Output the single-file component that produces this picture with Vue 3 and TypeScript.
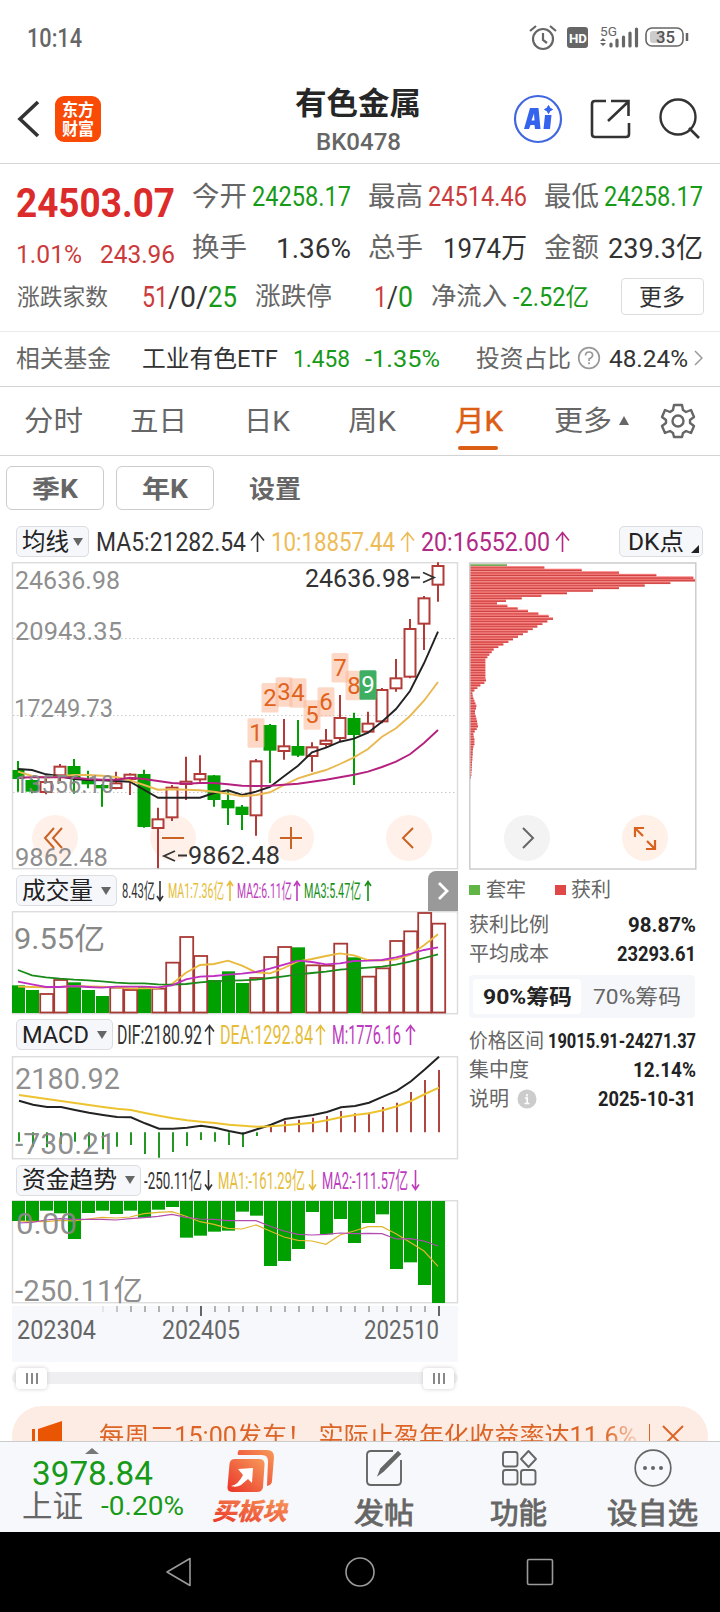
<script setup lang="ts">
import { h, type FunctionalComponent } from 'vue'

// Single-line label squeezed or stretched to a fixed advance width
const Fit: FunctionalComponent<{ t: string; w: number }> = (props) =>
  h('svg', { class: 'fit', width: props.w, height: '1em' }, [
    h('text', { x: 0, y: '.86em', textLength: props.w, lengthAdjust: 'spacingAndGlyphs', fill: 'currentColor', 'xml:space': 'preserve' }, props.t),
  ])
Fit.props = ['t', 'w']

const Arrow: FunctionalComponent<{ dir?: string; w?: number }> = (props) => {
  const w = props.w ?? 15
  const d = props.dir === 'down'
    ? `M${w / 2} 1V20M1 ${20 - w / 2}L${w / 2} 20.500L${w - 1} ${20 - w / 2}`
    : `M${w / 2} 21V2M1 ${2 + w / 2}L${w / 2} 1.500L${w - 1} ${2 + w / 2}`
  return h('svg', { class: 'arrow', width: w, height: 22 }, [
    h('path', { d, fill: 'none', stroke: 'currentColor', 'stroke-width': 1.6 }),
  ])
}
Arrow.props = ['dir', 'w']

type Candle = [up: number, high: number, low: number, top: number, bottom: number]
const third = (v: number) => v / 3
const candles: Candle[] = [
  [0, 618, 710, 645, 672], [0, 673, 715, 675, 710], [1, 672, 718, 678, 714], [1, 627, 678, 632, 664],
  [0, 612, 716, 633, 670], [0, 647, 700, 672, 688], [0, 688, 755, 690, 700], [1, 650, 703, 682, 702],
  [1, 655, 720, 656, 675], [0, 644, 818, 657, 816], [1, 758, 940, 790, 822], [1, 690, 798, 695, 790],
  [1, 605, 735, 677, 690], [1, 601, 680, 654, 676], [0, 660, 755, 661, 735], [0, 708, 810, 735, 760],
  [0, 750, 825, 755, 780], [1, 612, 842, 616, 784], [0, 507, 684, 510, 587], [1, 492, 614, 571, 591],
  [0, 495, 606, 573, 602], [1, 562, 650, 574, 606], [1, 522, 575, 554, 570], [1, 420, 560, 486, 552],
  [0, 473, 690, 489, 540], [1, 470, 535, 503, 533], [1, 399, 505, 402, 502], [1, 312, 410, 367, 403],
  [1, 192, 370, 219, 368], [1, 123, 285, 127, 209], [1, 22, 140, 30, 92],
]
const ma5 = [642, 645, 658, 664, 672, 675, 676, 678, 680, 704, 728, 728, 728, 728, 714, 706, 720, 710, 696, 664, 632, 592, 578, 560, 551, 533, 500, 462, 408, 325, 230]
const ma10 = [650, 663, 668, 664, 660, 660, 662, 666, 676, 690, 704, 703, 704, 706, 710, 716, 724, 720, 712, 690, 670, 657, 645, 627, 607, 582, 545, 520, 483, 437, 381]
const ma20 = [668, 667, 667, 667, 668, 672, 674, 674, 668, 672, 678, 684, 686, 684, 684, 688, 692, 693, 692, 689, 686, 680, 674, 667, 659, 650, 636, 620, 598, 564, 525]
const tags = [490, 384, 367, 370, 436, 397, 294, 347, 346].map((y, i) => ({ n: i + 1, x: 256 + 14 * i, y: third(y) - 7 }))

const cx = (i: number) => 18 + 14 * i
const line = (ys: number[], off: number, dx = 0) => ys.map((y, i) => `${cx(i) + dx},${(third(y) - off).toFixed(1)}`).join(' ')

const volumes: [number, number][] = [
  [0, 346], [0, 360], [1, 369], [1, 327], [0, 337], [0, 360], [0, 378], [1, 350], [1, 357], [0, 348], [1, 353],
  [1, 275], [1, 198], [1, 255], [0, 330], [0, 304], [0, 339], [1, 321], [1, 258], [1, 228], [0, 232], [1, 283],
  [1, 284], [1, 218], [0, 262], [1, 317], [1, 292], [1, 210], [1, 181], [1, 126], [1, 158],
]
const vol1 = [350, 351, 352, 351, 348, 349, 350, 352, 355, 355, 354, 342, 308, 285, 282, 272, 287, 307, 310, 294, 274, 267, 258, 250, 256, 270, 272, 268, 255, 226, 193]
const vol2 = [335, 343, 351, 351, 348, 351, 353, 350, 350, 350, 352, 346, 328, 320, 318, 314, 311, 306, 296, 284, 272, 276, 283, 280, 273, 272, 270, 262, 252, 240, 232]
const vol3 = [300, 316, 322, 326, 329, 331, 334, 338, 340, 340, 343, 344, 342, 337, 334, 332, 331, 329, 324, 319, 313, 309, 305, 299, 296, 293, 290, 284, 275, 264, 253]

const macd = [815, 830, 832, 822, 815, 835, 838, 830, 825, 852, 863, 846, 828, 810, 815, 825, 831, 798, 771, 752, 749, 743, 738, 723, 730, 728, 711, 698, 666, 630, 600]
const dif = [692, 704, 711, 711, 720, 728, 735, 741, 742, 760, 776, 776, 773, 767, 773, 783, 791, 778, 764, 747, 741, 735, 726, 712, 708, 698, 680, 662, 634, 598, 560]
const dea = [675, 681, 687, 693, 699, 705, 711, 716, 720, 729, 737, 745, 751, 755, 759, 764, 767, 770, 769, 766, 762, 758, 751, 742, 735, 730, 721, 709, 693, 672, 653]

const funds = [198, 199, 167, 175, 252, 174, 167, 177, 167, 188, 164, 156, 248, 242, 230, 227, 170, 182, 333, 318, 282, 171, 238, 192, 264, 204, 178, 342, 322, 390, 444]
const fund1 = [198, 199, 200, 196, 198, 192, 187, 189, 186, 176, 172, 170, 184, 200, 208, 220, 222, 210, 228, 246, 256, 258, 268, 240, 228, 215, 215, 236, 262, 288, 334]
const fund2 = [204, 202, 195, 191, 193, 193, 193, 195, 191, 188, 184, 178, 187, 192, 193, 197, 197, 197, 214, 228, 238, 240, 238, 234, 236, 235, 236, 252, 251, 258, 273]

const chips = [
  140, 252, 364, 476, 588, 699, 707, 630, 553, 476, 398, 320, 243, 184, 137, 110, 141, 172, 203, 234, 265, 278, 261, 246,
  231, 217, 202, 188, 173, 158, 144, 129, 114, 100, 94, 87, 81, 75, 75, 75, 75, 75, 75, 75, 75, 77, 72, 60, 51, 42, 36, 37, 39, 42,
  45, 48, 47, 44, 44, 46, 48, 50, 51, 53, 49, 43, 39, 40, 42, 42, 42, 39, 38, 37, 37, 36, 36, 35, 35, 34, 34, 33, 33, 32,
].map((x, i) => ({ w: (x - 29) / 3, y: 1.6 + i * 2.56, up: i > 0 }))

const ticks = Array.from({ length: 25 }, (_, i) => ({ x: 103 + 14 * i, tall: i === 7 || i === 24, op: i === 0 ? 0.25 : i === 1 ? 0.7 : 1 }))
</script>

<template>
  <div class="screen">
    <div class="status">
      <Fit t="10:14" :w="55" class="clock" />
      <svg width="164" height="26" viewBox="0 0 164 26" class="sysicons">
        <g fill="none" stroke="#666" stroke-width="2.200">
          <circle cx="15" cy="14" r="10" /><path d="M15 8v7l4 3M2 6l6-5M28 6l-6-5" />
          <rect x="118" y="3" width="37" height="18" rx="6" stroke-width="1.600" />
        </g>
        <rect x="39" y="2" width="21" height="21" rx="3" fill="#666" />
        <text x="41" y="17.500" font-size="13.500" font-weight="700" fill="#fff" textLength="18" lengthAdjust="spacingAndGlyphs">HD</text>
        <text x="72" y="11" font-size="13" fill="#666" textLength="17" lengthAdjust="spacingAndGlyphs">5G</text>
        <path d="M72 16l3-3 3 3zM72 18l3 3 3-3z" fill="#666" />
        <path d="M83 19v2M89 15v6M95.500 12v9M102 8v13M108.500 4v17" stroke="#666" stroke-width="3.200" stroke-linecap="round" />
        <rect x="122" y="6" width="14" height="12" rx="3" fill="#ccc" />
        <text x="128" y="18" font-size="17" font-weight="500" fill="#555" textLength="19" lengthAdjust="spacingAndGlyphs">35</text>
        <path d="M159 8v8" stroke="#666" stroke-width="2.500" />
      </svg>
    </div>

    <header class="header">
      <svg class="back" width="24" height="38" viewBox="0 0 24 38"><path d="M22 2 4 19l18 17" fill="none" stroke="#333" stroke-width="3.600" /></svg>
      <div class="logo"><Fit t="东方" :w="32" /><Fit t="财富" :w="32" /></div>
      <div class="title"><Fit class="name" t="有色金属" :w="126" /><Fit class="code" t="BK0478" :w="85" /></div>
      <svg class="tools" width="200" height="50" viewBox="0 0 200 50" fill="none" stroke="#333" stroke-width="2.400">
        <circle cx="29" cy="25" r="23" stroke="#4066e0" stroke-width="2.200" />
        <path d="M15 35 21 14h8.500l2 21h-5.500l-.5-4h-4l-1.500 4zM22.500 26.500h3l-.5-7z" fill="#3563ee" fill-rule="evenodd" stroke="none" />
        <path d="M36 21h6.500l-1.500 14h-6.500z" fill="#3563ee" stroke="none" /><path d="M39.500 11.500l1.400 2.600 2.600 1.400-2.600 1.400-1.400 2.600-1.400-2.600-2.600-1.400 2.600-1.400z" fill="#3563ee" stroke="#3563ee" stroke-width="1" />
        <path d="M97 7H86q-3 0-3 3v30q0 3 3 3h31q3 0 3-3V29M102 7h17.500v15M119 8 99 27" stroke-width="2.600" />
        <circle cx="169" cy="23" r="17.500" stroke-width="2.400" /><path d="m180 34 10 10" stroke-width="2.600" />
      </svg>
    </header>

    <section class="quote">
      <div class="top">
        <div class="price">
          <Fit class="last" t="24503.07" :w="159" />
          <div class="change"><Fit t="1.01%" :w="66" /><Fit t="243.96" :w="75" /></div>
        </div>
        <div class="stats">
          <Fit t="今开" :w="55" /><Fit class="num green" t="24258.17" :w="99" />
          <Fit t="最高" :w="55" /><Fit class="num red" t="24514.46" :w="99" />
          <Fit t="最低" :w="55" /><Fit class="num green" t="24258.17" :w="99" />
          <Fit t="换手" :w="55" /><Fit class="num big dark" t="1.36%" :w="75" />
          <Fit t="总手" :w="55" /><Fit class="num big dark" t="1974万" :w="84" />
          <Fit t="金额" :w="55" /><Fit class="num big dark" t="239.3亿" :w="95" />
        </div>
      </div>
      <div class="breadth">
        <Fit t="涨跌家数" :w="91" class="s22" />
        <span class="ratio dark"><Fit class="red" t="51" :w="26" /><Fit t="/" :w="12" /><Fit t="0" :w="16" /><Fit t="/" :w="12" /><Fit class="green" t="25" :w="29" /></span>
        <Fit t="涨跌停" :w="77" class="s25" />
        <span class="ratio dark"><Fit class="red" t="1" :w="13" /><Fit t="/" :w="11" /><Fit class="green" t="0" :w="15" /></span>
        <Fit t="净流入" :w="76" class="s25" />
        <Fit class="green s24" t="-2.52亿" :w="76" />
        <button class="more"><Fit t="更多" :w="46" /></button>
      </div>
    </section>

    <div class="fund">
      <Fit t="相关基金" :w="95" /><Fit class="dark" t="工业有色ETF" :w="136" />
      <Fit class="green" t="1.458" :w="57" /><Fit class="green" t="-1.35%" :w="75" />
      <Fit t="投资占比" :w="95" />
      <svg width="24" height="24" viewBox="0 0 24 24" fill="none" stroke="#999" stroke-width="1.700"><circle cx="12" cy="12" r="10.300" /><path d="M8.500 9.500q0-3.500 3.600-3.500t3.500 3.300q0 2-3.500 3.600v2M12 16.300v2" /></svg>
      <Fit class="dark" t="48.24%" :w="79" />
      <svg width="9" height="16" viewBox="0 0 9 16" fill="none" stroke="#999" stroke-width="1.500"><path d="m1 1 7 7-7 7" /></svg>
    </div>

    <nav class="tabs">
      <Fit t="分时" :w="59" /><Fit t="五日" :w="57" /><Fit t="日K" :w="46" /><Fit t="周K" :w="48" />
      <span class="current"><Fit t="月K" :w="48" /></span>
      <Fit t="更多" :w="58" />
      <svg width="11" height="10"><path d="M0 9h10L5 0z" fill="#666" /></svg>
      <svg width="36" height="36" viewBox="-18 -18 36 36" fill="none" stroke="#666" stroke-width="2.400" stroke-linejoin="round">
        <path d="M-4-16H4L5-11 8-9 13-11 16-4 12-1V2L16 5 13 12 8 10 5 12 4 16H-4L-5 12-8 10-13 12-16 5-12 2V-1L-16-4-13-11-8-9-5-11Z" /><circle r="5.500" />
      </svg>
    </nav>

    <div class="periods">
      <button><Fit t="季K" :w="46" /></button><button><Fit t="年K" :w="46" /></button><Fit t="设置" :w="52" />
    </div>

    <div class="legend ma">
      <button class="pick"><Fit t="均线" :w="47" /><i class="caret" /></button>
      <Fit t="MA5:21282.54" :w="150" /><Arrow />
      <Fit class="gold" t="10:18857.44" :w="124" /><Arrow class="gold" />
      <Fit class="mag" t="20:16552.00" :w="129" /><Arrow class="mag" />
      <button class="pick dk"><Fit t="DK点" :w="56" /><i class="corner" /></button>
    </div>

    <main class="charts">
      <div class="left">
        <svg class="plot" width="470" height="308" viewBox="0 0 470 308">
          <rect x="12.500" y=".7" width="445" height="306" fill="none" stroke="#ddd" stroke-width="1.500" />
          <path d="M13 76.500H457M13 153.500H457M13 230.500H457" stroke="#c8c8c8" stroke-width="1" stroke-dasharray="1.500 2.500" />
          <g fill="#fff1e9"><circle cx="55" cy="276" r="23" /><circle cx="173" cy="276" r="23" /><circle cx="291" cy="276" r="23" /><circle cx="409" cy="276" r="23" /></g>
          <g v-for="(c, i) in candles" :key="i" :stroke="c[0] ? '#b13b37' : '#00a000'" :fill="c[0] ? '#fff' : '#00a000'">
            <line :x1="cx(i)" :x2="cx(i)" :y1="third(c[1]) - 7" :y2="third(c[2]) - 7" stroke-width="2" />
            <rect :x="cx(i) - (i ? 5.500 : 4.500)" :y="third(c[3]) - 6" :width="i ? 11 : 10" :height="Math.max(third(c[4] - c[3]) - 2, 1)" stroke-width="2" />
          </g>
          <g fill="none" stroke-width="1.900">
            <polyline :points="line(ma5, 7)" stroke="#222" />
            <polyline :points="line(ma10, 7)" stroke="#e9b850" />
            <polyline :points="line(ma20, 7)" stroke="#b5207e" />
          </g>
          <g v-for="t in tags" :key="t.n" font-size="24" text-anchor="middle">
            <rect :x="t.x - 8.500" :y="t.y" width="17" height="29.500" rx="1.500" :fill="t.n === 9 ? '#3dae62' : '#fcb898'" :fill-opacity="t.n === 9 ? 1 : .55" />
            <text :x="t.x" :y="t.y + 23" :fill="t.n === 9 ? '#fff' : '#e0621c'">{{ t.n }}</text>
          </g>
          <g font-size="26.500" fill="#888" fill-opacity=".95">
            <text x="15" y="27" textLength="105" lengthAdjust="spacingAndGlyphs">24636.98</text>
            <text x="15" y="78" textLength="107" lengthAdjust="spacingAndGlyphs">20943.35</text>
            <text x="14" y="155" textLength="99" lengthAdjust="spacingAndGlyphs">17249.73</text>
            <text x="15" y="231" textLength="99" lengthAdjust="spacingAndGlyphs">13556.10</text>
            <text x="15" y="304" textLength="93" lengthAdjust="spacingAndGlyphs">9862.48</text>
          </g>
          <g font-size="26.500" fill="#333">
            <text x="305" y="25" textLength="105" lengthAdjust="spacingAndGlyphs">24636.98</text>
            <text x="188" y="302" textLength="92" lengthAdjust="spacingAndGlyphs">9862.48</text>
            <path d="M411 15.500h9M423 10.500l11 5-11 5M175 289l-11 5 11 5M178 293.500h9" fill="none" stroke="#333" stroke-width="1.800" />
          </g>
          <path d="m54 266-9 10 9 10m8-20-9 10 9 10M162 276h22M280 276h22m-11-11v22M413 266l-10 10 10 10" fill="none" stroke="#c96225" stroke-width="2" />
        </svg>

        <div class="legend vol">
          <button class="pick"><Fit t="成交量" :w="71" /><i class="caret" /></button>
          <Fit t="8.43亿" :w="33" /><Arrow dir="down" :w="8" />
          <Fit class="yel" t="MA1:7.36亿" :w="56" /><Arrow class="yel" :w="8" />
          <Fit class="pur" t="MA2:6.11亿" :w="55" /><Arrow class="pur" :w="8" />
          <Fit class="grn" t="MA3:5.47亿" :w="57" /><Arrow class="grn" :w="8" />
          <span class="next"><svg width="12" height="20"><path d="m2 2 8 8-8 8" fill="none" stroke="#fff" stroke-width="2.800" /></svg></span>
        </div>
        <svg class="plot" width="470" height="104" viewBox="0 0 470 104">
          <rect x="12.500" y=".7" width="445" height="102" fill="none" stroke="#ddd" stroke-width="1.500" />
          <template v-for="(v, i) in volumes" :key="i">
            <rect v-if="v[0]" :x="cx(i) - 5.800" :y="third(v[1]) - 40" width="13" :height="102 - third(v[1]) + 39.500" fill="#fff" stroke="#a83a36" stroke-width="1.800" />
            <rect v-else :x="cx(i) - 6" :y="third(v[1]) - 41" width="13" :height="143 - third(v[1])" fill="#00a000" />
          </template>
          <g fill="none" stroke-width="1.800">
            <polyline :points="line(vol1, 41)" stroke="#e9b93c" /><polyline :points="line(vol3, 41)" stroke="#1a8a1a" /><polyline :points="line(vol2, 41)" stroke="#c030c0" />
          </g>
          <text x="14" y="38" font-size="30" fill="#888" textLength="91" lengthAdjust="spacingAndGlyphs">9.55亿</text>
        </svg>

        <div class="legend osc">
          <button class="pick"><Fit t="MACD" :w="67" /><i class="caret" /></button>
          <Fit t="DIF:2180.92" :w="85" /><Arrow :w="11" />
          <Fit class="yel" t="DEA:1292.84" :w="93" /><Arrow class="yel" :w="11" />
          <Fit class="pur" t="M:1776.16" :w="69" /><Arrow class="pur" :w="11" />
        </div>
        <svg class="plot" width="470" height="104" viewBox="0 0 470 104">
          <rect x="12.500" y=".7" width="445" height="102" fill="none" stroke="#ddd" stroke-width="1.500" />
          <line v-for="(m, i) in macd" :key="i" :x1="cx(i) + 1" :x2="cx(i) + 1" :y1="76.300" :y2="third(m) - 186" :stroke="m > 787 ? '#0b8a0b' : '#a8322c'" stroke-width="1.800" />
          <g fill="none" stroke-width="2"><polyline :points="line(dif, 186, 1)" stroke="#222" /><polyline :points="line(dea, 186, 1)" stroke="#edc32f" /></g>
          <g font-size="30" fill="#888" fill-opacity=".95">
            <text x="15" y="33" textLength="105" lengthAdjust="spacingAndGlyphs">2180.92</text>
            <text x="15" y="98" textLength="101" lengthAdjust="spacingAndGlyphs">-730.21</text>
          </g>
        </svg>

        <div class="legend flow">
          <button class="pick"><Fit t="资金趋势" :w="95" /><i class="caret" /></button>
          <Fit t="-250.11亿" :w="58" /><Arrow dir="down" :w="9" />
          <Fit class="yel" t="MA1:-161.29亿" :w="87" /><Arrow dir="down" class="yel" :w="9" />
          <Fit class="pur" t="MA2:-111.57亿" :w="86" /><Arrow dir="down" class="pur" :w="9" />
        </div>
        <svg class="plot" width="470" height="104" viewBox="0 0 470 104">
          <rect x="12.500" y=".7" width="445" height="102" fill="none" stroke="#ddd" stroke-width="1.500" />
          <rect v-for="(f, i) in funds" :key="i" :x="cx(i) - 6" y="1" width="13" :height="third(f - 138)" fill="#00a000" />
          <g fill="none" stroke-width="1.200"><polyline :points="line(fund1, 45)" stroke="#e0b52c" /><polyline :points="line(fund2, 45)" stroke="#b44bb0" /></g>
          <g font-size="30" fill="#888" fill-opacity=".95">
            <text x="16" y="34" textLength="61" lengthAdjust="spacingAndGlyphs">0.00</text>
            <text x="15" y="101" font-size="29" textLength="128" lengthAdjust="spacingAndGlyphs">-250.11亿</text>
          </g>
        </svg>

        <div class="axis">
          <svg width="446" height="11" viewBox="12 0 446 11"><line v-for="t in ticks" :key="t.x" :x1="t.x" :x2="t.x" y1="0" :y2="t.tall ? 10 : 6" :stroke="t.tall ? '#555' : '#aaa'" :opacity="t.op" stroke-width="1.800" /></svg>
          <div class="dates"><Fit t="202304" :w="79" /><Fit t="202405" :w="78" /><Fit t="202510" :w="75" /></div>
        </div>
        <div class="slider"><span class="grip"><i /><i /><i /></span><span class="grip"><i /><i /><i /></span></div>
      </div>

      <aside class="right">
        <svg width="228" height="308" viewBox="0 0 228 308">
          <g v-for="(c, i) in chips" :key="i">
            <rect x="1" :y="c.y" :width="c.w" height="2.560" :fill="c.up ? '#f47472' : '#a4c98c'" />
            <rect x="1" :y="c.y + 1.200" :width="c.w" height="1.100" :fill="c.up ? '#cb4343' : '#6da455'" />
          </g>
          <rect x=".8" y="1" width="226" height="306" fill="none" stroke="#ccc" stroke-width="1.500" />
          <circle cx="58" cy="276" r="23" fill="#f3f3f3" /><path d="m54 266 10 10-10 10" fill="none" stroke="#666" stroke-width="2" />
          <circle cx="176" cy="276" r="23" fill="#fff0e8" />
          <path d="M166 275v-9h9m-8 1 7 7M186 278v9h-9m8-1-7-7" fill="none" stroke="#d9621e" stroke-width="2.200" />
        </svg>
        <div class="keys"><i class="g" /><Fit t="套牢" :w="40" /><i class="r" /><Fit t="获利" :w="40" /></div>
        <div class="kv"><Fit t="获利比例" :w="80" /><Fit class="v" t="98.87%" :w="68" /></div>
        <div class="kv"><Fit t="平均成本" :w="80" /><Fit class="v" t="23293.61" :w="79" /></div>
        <div class="seg"><span class="on"><Fit t="90%筹码" :w="89" /></span><span><Fit t="70%筹码" :w="88" /></span></div>
        <div class="kv"><Fit t="价格区间" :w="75" /><Fit class="v" t="19015.91-24271.37" :w="148" /></div>
        <div class="kv"><Fit t="集中度" :w="60" /><Fit class="v" t="12.14%" :w="63" /></div>
        <div class="kv"><span class="info"><Fit t="说明" :w="40" /><svg width="20" height="20"><circle cx="10" cy="10" r="9.500" fill="#ccc" /><path d="M10 5v2.400M8 9h2.200v5.500M7.500 14.500h5" fill="none" stroke="#fff" stroke-width="1.600" /></svg></span><Fit class="v" t="2025-10-31" :w="98" /></div>
      </aside>
    </main>

    <div class="bannerclip">
      <div class="banner">
        <svg width="34" height="34" viewBox="0 0 34 34" fill="#ea5504"><path d="M0 10h3v16H0zM6 10 30 2v30L6 25z" /></svg>
        <Fit t="每周二15:00发车！ 实际止盈年化收益率达11.6%" :w="538" class="promo" />
        <i class="bar" />
        <svg width="22" height="24" fill="none" stroke="#dc6426" stroke-width="2"><path d="m1 2 20 20M21 2 1 22" /></svg>
      </div>
    </div>

    <footer class="dock">
      <div class="index">
        <svg width="14" height="6"><path d="M0 6h14L7 0z" fill="#777" /></svg>
        <Fit class="val" t="3978.84" :w="121" />
        <div class="sub"><Fit class="sh" t="上证" :w="61" /><Fit class="pct" t="-0.20%" :w="83" /></div>
      </div>
      <div class="act buy">
        <svg width="50" height="44" viewBox="0 0 50 44">
          <defs><linearGradient id="lg" x1="0" y1="1" x2="1" y2="0"><stop offset="0" stop-color="#ea3328" /><stop offset="1" stop-color="#f79a5a" /></linearGradient></defs>
          <path d="M13 1h28q7 0 7 7l-2 24q0 4-5 5l1-25q0-6-6-6H12q-1-3 1-5z" fill="url(#lg)" />
          <path d="M9 10h24q6 0 5.500 6l-1.500 22q-.5 5-6 5H6q-5 0-4.500-5L3.500 15q.5-5 5.500-5z" fill="url(#lg)" />
          <path d="m12 20 15-1-1 15-4-4-7 6q-5 3-10 1 7-1 12-11z" fill="#fff" />
        </svg>
        <svg width="80" height="28"><text x="1" y="22.500" font-size="24" font-weight="900" font-style="italic" fill="url(#lg)" textLength="75" lengthAdjust="spacingAndGlyphs">买板块</text></svg>
      </div>
      <div class="act">
        <svg width="38" height="38" viewBox="0 0 38 38" fill="none" stroke="#666" stroke-width="1.900"><path d="M28 2H6Q2 2 2 6v26q0 4 4 4h26q4 0 4-4V11" /><path d="m14 25 2-5L33 3l2 2-17 17z" fill="#666" /></svg>
        <Fit t="发帖" :w="60" />
      </div>
      <div class="act">
        <svg width="38" height="38" viewBox="0 0 38 38" fill="none" stroke="#666" stroke-width="1.900"><rect x="3" y="3" width="14.500" height="14.500" rx="2.500" /><rect x="3" y="21" width="14.500" height="14.500" rx="2.500" /><rect x="21" y="21" width="14.500" height="14.500" rx="2.500" /><path d="m28.500 2 7.500 8-7.500 8-7.500-8z" stroke-linejoin="round" /></svg>
        <Fit t="功能" :w="57" />
      </div>
      <div class="act">
        <svg width="38" height="38" viewBox="0 0 38 38" fill="none" stroke="#666" stroke-width="1.700"><circle cx="19" cy="19" r="17.800" /><g fill="#666" stroke="none"><circle cx="11" cy="19" r="2" /><circle cx="19" cy="19" r="2" /><circle cx="27" cy="19" r="2" /></g></svg>
        <Fit t="设自选" :w="91" />
      </div>
    </footer>

    <div class="sysnav">
      <svg width="28" height="32" viewBox="0 0 28 32"><path d="M25 2.500v27L2 16z" /></svg>
      <svg width="32" height="32" viewBox="0 0 32 32"><circle cx="16" cy="16" r="14" /></svg>
      <svg width="28" height="28" viewBox="0 0 28 28"><rect x="1.500" y="1.500" width="25" height="25" rx="1.500" /></svg>
    </div>
  </div>
</template>

<style>
body { margin: 0; background: #fff; }
</style>

<style scoped>
.screen { width: 720px; height: 1612px; overflow: hidden; background: #fff; color: #666; font-family: Roboto, "Noto Sans CJK SC", sans-serif; font-size: 25px; display: flex; flex-direction: column; }
.screen > * { flex-shrink: 0; box-sizing: border-box; }
svg { display: block; flex: none; }
.fit, .arrow { overflow: visible; }
button { padding: 0; margin: 0; background: none; color: inherit; font: inherit; display: flex; align-items: center; justify-content: center; box-sizing: border-box; }
.dark { color: #333; }
.green { color: #179a17; }
.red { color: #cb3b3b; }
.gold { color: #edbb58; }
.mag { color: #b12a86; }
.yel { color: #e5bd3a; }
.pur { color: #bd3cbd; }
.grn { color: #179017; }

.status { height: 75px; display: flex; align-items: center; justify-content: space-between; padding: 0 28px 0 27px; }
.clock { font-weight: 500; font-size: 25px; }

.header { height: 89px; border-bottom: 1px solid #d6d6d6; display: grid; grid-template-columns: 39px 132px 302px 200px; align-items: center; padding-left: 16px; }
.logo { width: 46px; height: 46px; border-radius: 9px; background: #f94a06; color: #fff; font-size: 17px; font-weight: 700; display: flex; flex-direction: column; align-items: center; justify-content: center; gap: 2px; }
.title { display: flex; flex-direction: column; align-items: center; gap: 11px; padding: 2px 0 0 40px; color: #262626; }
.name { font-size: 31px; font-weight: 700; }
.code { font-size: 24px; color: #666; font-weight: 500; }
.tools { margin-left: 20px; }

.quote { height: 168px; border-bottom: 1px solid #ebebeb; padding-top: 7px; }
.top { display: flex; height: 101px; }
.price { width: 176px; padding: 12px 0 0 16px; box-sizing: border-box; display: flex; flex-direction: column; }
.last { font-size: 40px; font-weight: 700; color: #dc2b2b; }
.change { display: flex; gap: 18px; margin-top: 17px; font-size: 26.5px; color: #cb3b3b; }
.stats { width: 511px; display: grid; grid-template-columns: 55px 104px 72px 104px 72px 104px; grid-auto-rows: 51px; align-items: center; font-size: 27px; margin-left: 16px; }
.stats > .fit:nth-child(odd):not(:nth-child(6n+1)) { justify-self: end; }
.stats > .num { justify-self: end; }
.big { font-size: 28px; }
.breadth { height: 48px; display: grid; grid-template-columns: 125px 113px 119px 57px 82px 108px 82px; padding-left: 16.5px; align-items: center; }
.s22 { font-size: 23px; }
.s25 { font-size: 25.5px; }
.s24 { font-size: 25px; }
.ratio { display: flex; font-size: 29px; }
.more { width: 83px; height: 37px; border: 1.5px solid #ddd; border-radius: 4px; font-size: 23px; color: #333; }

.fund { height: 55px; border-bottom: 1px solid #d3d3d3; display: grid; grid-template-columns: 126px 151px 72px 111px 101px 32px 85px 10px; padding: 0 0 2px 16px; align-items: center; font-size: 24px; }

.tabs { height: 69px; border-bottom: 1px solid #d3d3d3; display: grid; grid-template-columns: 106px 114px 104px 107px 99px 65px 41px 36px; padding-left: 24px; align-items: center; font-size: 28px; }
.current { position: relative; color: #dc5d14; height: 68px; display: flex; align-items: center; }
.current .fit { stroke: currentColor; stroke-width: .5px; }
.current::after { content: ""; position: absolute; left: 3px; bottom: 5px; width: 40px; height: 4px; border-radius: 2px; background: #dc5d14; }

.periods { height: 70px; padding: 9px 0 15px 6px; display: flex; align-items: center; gap: 12px; font-weight: 700; font-size: 25px; }
.periods button { width: 98px; height: 44px; border: 1px solid #ccc; border-radius: 6px; }
.periods > .fit { margin-left: 23px; }

.legend { display: grid; align-items: center; color: #333; box-sizing: border-box; }
.pick { height: 31px; background: #f6f7fa; border: 1px solid #dcdde1; border-radius: 5px; justify-content: space-between; font-size: 23.5px; padding: 0 5px; color: #222; }
.caret { border: 5px solid transparent; border-top: 8px solid #666; border-bottom: 0; }
.corner { align-self: flex-end; border-left: 8px solid transparent; border-bottom: 8px solid #222; margin: 0 -2px 3px 0; }
.ma { height: 36px; padding: 0 0 7px 16px; grid-template-columns: 80px 154px 21px 129px 21px 134px 64px 84px; font-size: 25px; }
.ma .pick { width: 73px; }
.ma .dk { width: 84px; padding: 0 5px 0 8px; }

.charts { display: flex; height: 844px; }
.left { width: 469px; }
.plot { overflow: hidden; }
.vol { height: 41px; padding-left: 16px; grid-template-columns: 106px 34px 12px 58px 11px 56px 11px 60px 64px 30px; font-size: 21px; }
.vol .pick { width: 101px; }
.next { width: 30px; height: 40px; background: #999; border-radius: 8px 0 0 0; display: flex; align-items: center; justify-content: center; }
.osc { height: 41px; padding: 0 0 2px 16px; grid-template-columns: 101px 87px 16px 95px 17px 73px 20px; font-size: 25px; }
.osc .pick { width: 97px; }
.flow { height: 40px; padding-left: 16px; grid-template-columns: 128px 60px 14px 90px 14px 89px 20px; font-size: 24px; }
.flow .pick { width: 125px; }
.axis { margin: 2px 0 0 12px; width: 446px; height: 56px; background: #f7f8fb; }
.dates { display: grid; grid-template-columns: 145px 202px 80px; padding-left: 5px; font-size: 25px; }
.slider { margin: 10px 0 0 12px; width: 446px; height: 12px; border-radius: 6px; background: #efeff2; display: flex; justify-content: space-between; align-items: center; padding: 0 4px; box-sizing: border-box; }
.grip { width: 31px; height: 21px; border-radius: 4px; background: #fff; box-shadow: 0 0 4px #ccc; display: flex; align-items: center; justify-content: center; gap: 3px; }
.grip i { width: 2px; height: 11px; background: #888; }

.right { width: 228px; font-size: 20px; }
.keys { height: 40px; display: grid; grid-template-columns: 17px 69px 16px 40px; align-items: center; }
.keys i { width: 11px; height: 10px; }
.keys .g { background: #61b545; }
.keys .r { background: #e04848; }
.kv { height: 29px; display: flex; align-items: center; justify-content: space-between; padding-right: 1px; }
.v { font-weight: 700; color: #222; font-size: 20.5px; }
.seg { margin: 7px 0 8px; height: 43px; width: 226px; background: #f6f7fa; border-radius: 4px; display: flex; justify-content: space-between; align-items: center; padding: 0 4px; box-sizing: border-box; font-size: 21px; }
.seg span { height: 35px; width: 108px; display: flex; align-items: center; justify-content: center; }
.seg .on { background: #fff; font-weight: 700; color: #222; border-radius: 4px; }
.info { display: flex; align-items: center; gap: 8px; }

.bannerclip { height: 35px; overflow: hidden; padding: 0 12px; }
.banner { height: 60px; border-radius: 30px; background: #fdece3; color: #dc6426; display: grid; grid-template-columns: 67px 550px 13px 22px; padding-left: 20px; align-items: center; font-size: 25.5px; box-sizing: border-box; }
.promo { -webkit-mask: linear-gradient(90deg, #000 94%, #0003); mask: linear-gradient(90deg, #000 94%, #0003); }
.bar { width: 1px; height: 24px; background: #dc6426; }

.dock { height: 91px; border-top: 1px solid #ccc; background: #f7f8fb; display: grid; grid-template-columns: 205px 92px 173px 97px 171px; justify-content: start; }
.index { display: flex; flex-direction: column; padding: 6px 0 0 22px; color: #179a17; }
.index > svg:first-child { margin-left: 63px; }
.val { font-size: 34px; margin: 2px 0 0 10px; }
.sub { display: flex; align-items: center; gap: 18px; }
.sh { font-size: 31px; color: #666; }
.pct { font-size: 26px; }
.act { display: flex; flex-direction: column; align-items: center; padding-top: 7px; font-size: 29px; gap: 12px; }
.act .fit { stroke: currentColor; stroke-width: .9px; }
.buy { gap: 4px; }

.sysnav { height: 80px; background: #000; display: flex; align-items: center; padding: 0 166px 0 165px; justify-content: space-between; }
.sysnav svg { fill: none; stroke: #9a9a9a; stroke-width: 1.6; stroke-linejoin: round; }
</style>
